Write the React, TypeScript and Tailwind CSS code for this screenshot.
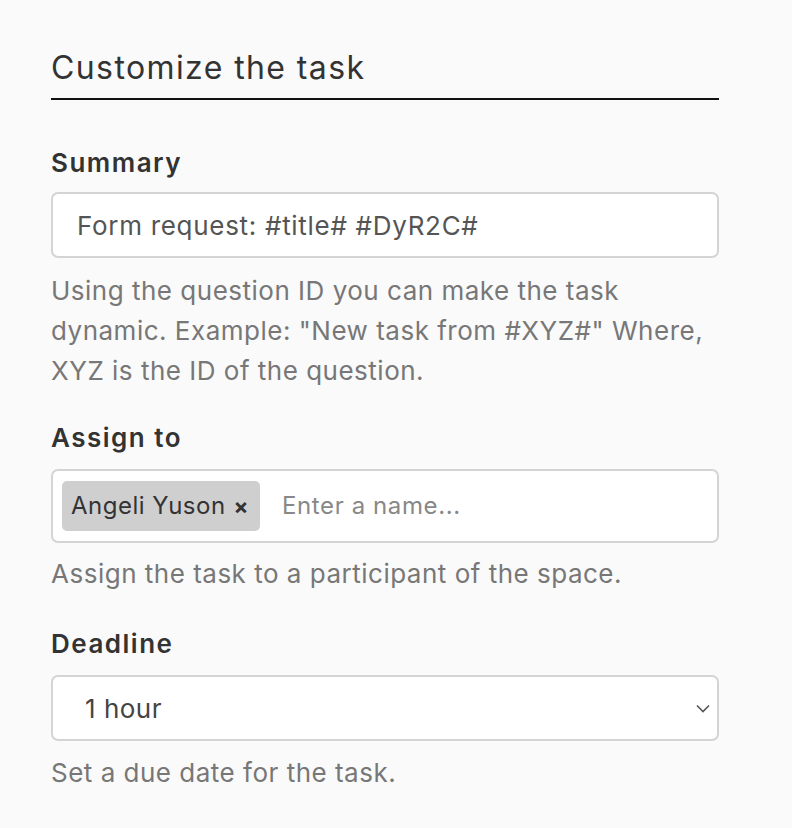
import React, { useState } from 'react';

const font = { fontFamily: 'Inter, "Noto Sans", sans-serif' };

const Label: React.FC<{ htmlFor: string; children: React.ReactNode }> = ({ htmlFor, children }) => (
    <label htmlFor={htmlFor} className="block text-[26px] leading-[32px] font-semibold tracking-[1.5px] text-[#333]">
        {children}
    </label>
);

const Help: React.FC<{ className?: string; children: React.ReactNode }> = ({ className = '', children }) => (
    <p className={`text-[26px] leading-[40px] tracking-[0.5px] text-[#777] ${className}`}>{children}</p>
);

export default function App() {
    const [summary, setSummary] = useState('Form request: #title# #DyR2C#');
    const [assignees, setAssignees] = useState<string[]>(['Angeli Yuson']);
    const [deadline, setDeadline] = useState('1 hour');

    return (
        <div className="min-h-[828px] w-full bg-[#fafafa]" style={font}>
            <div className="w-[668px] ml-[51px] pt-[48px]">
                <h2 className="text-[32px] leading-[40px] font-normal tracking-[1.4px] text-[#333] pb-[10px] border-b-2 border-[#111]">
                    Customize the task
                </h2>

                {/* Summary */}
                <div className="mt-[47px]">
                    <Label htmlFor="summary">Summary</Label>
                    <input
                        id="summary"
                        type="text"
                        value={summary}
                        onChange={e => setSummary(e.target.value)}
                        className="mt-[13px] block w-full h-[66px] px-[24px] bg-white border-2 border-[#d4d4d4] rounded-[7px] text-[26px] tracking-[0.7px] text-[#555] outline-none"
                    />
                    <Help className="mt-[13px]">
                        Using the question ID you can make the task dynamic. Example: "New task from #XYZ#" Where, XYZ is the ID of the question.
                    </Help>
                </div>

                {/* Assign to */}
                <div className="mt-[31px]">
                    <Label htmlFor="assignee">Assign to</Label>
                    <div className="mt-[15px] flex items-center gap-[22px] h-[74px] px-[9px] bg-white border-2 border-[#d4d4d4] rounded-[7px]">
                        {assignees.map(name => (
                            <span key={name} className="flex items-center gap-[8px] h-[50px] pl-[9px] pr-[11px] bg-[#cfcfcf] rounded-[5px] text-[24px] tracking-[0.5px] text-[#333]">
                                {name}
                                <button
                                    type="button"
                                    onClick={() => setAssignees(assignees.filter(a => a !== name))}
                                    className="text-[22px] font-bold text-[#333] leading-none"
                                >
                                    ×
                                </button>
                            </span>
                        ))}
                        <input
                            id="assignee"
                            type="text"
                            placeholder="Enter a name..."
                            className="flex-1 min-w-0 bg-transparent text-[24px] tracking-[0.6px] text-[#555] placeholder:text-[#888] outline-none"
                        />
                    </div>
                    <Help className="mt-[11px]">Assign the task to a participant of the space.</Help>
                </div>

                {/* Deadline */}
                <div className="mt-[34px]">
                    <Label htmlFor="deadline">Deadline</Label>
                    <div className="relative mt-[15px]">
                        <select
                            id="deadline"
                            value={deadline}
                            onChange={e => setDeadline(e.target.value)}
                            className="block w-full h-[66px] pl-[32px] pr-[40px] appearance-none bg-white border-2 border-[#d4d4d4] rounded-[7px] text-[26px] tracking-[0.5px] text-[#444] outline-none"
                        >
                            <option>15 minutes</option>
                            <option>1 hour</option>
                            <option>1 day</option>
                            <option>1 week</option>
                        </select>
                        <svg
                            className="pointer-events-none absolute right-[9px] top-[29px]"
                            width="14"
                            height="9"
                            viewBox="0 0 14 9"
                            fill="none"
                            stroke="#555"
                            strokeWidth="1.6"
                        >
                            <path d="M1 1.5 7 7.5 13 1.5" />
                        </svg>
                    </div>
                    <Help className="mt-[12px]">Set a due date for the task.</Help>
                </div>
            </div>
        </div>
    );
}
